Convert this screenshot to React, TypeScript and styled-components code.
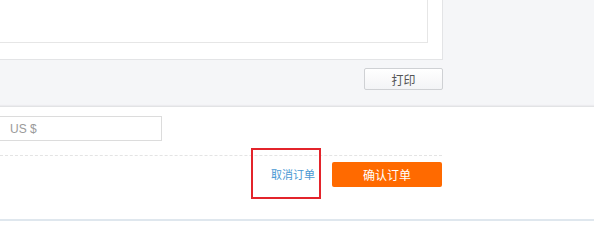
import styled, { createGlobalStyle } from "styled-components";

const GlobalStyle = createGlobalStyle`
  html, body {
    margin: 0;
    padding: 0;
    background: #ffffff;
    font-family: "Noto Sans CJK SC", "Liberation Sans", sans-serif;
    font-size: 12px;
  }
`;

const Page = styled.div`
  width: 594px;
  height: 221px;
  overflow: hidden;
  display: flex;
  flex-direction: column;
`;

const PrintArea = styled.section`
  background: #f5f6f8;
  height: 107px;
  flex-shrink: 0;
  box-sizing: border-box;
  border-bottom: 1px solid #e2e3e5;
  box-shadow: inset 0 -2px 1px -1px #ebecee;
  padding-right: 151px;
  display: flex;
  flex-direction: column;
`;

const Panel = styled.div`
  background: #ffffff;
  height: 60px;
  box-sizing: border-box;
  border-right: 1px solid #e3e4e6;
  border-bottom: 1px solid #e3e4e6;
  padding: 0 14px 16px 0;
  display: flex;
`;

const Memo = styled.div`
  flex: 1;
  border-right: 1px solid #e6e6e6;
  border-bottom: 1px solid #e6e6e6;
`;

const PrintRow = styled.div`
  display: flex;
  justify-content: flex-end;
  padding-top: 8px;
`;

const GhostButton = styled.button`
  width: 79px;
  height: 22px;
  box-sizing: border-box;
  border: 1px solid #cfd1d4;
  border-radius: 2px;
  background: linear-gradient(#ffffff, #f3f4f6);
  color: #555;
  font-family: inherit;
  font-size: 12px;
  padding: 0;
  cursor: pointer;
`;

const OrderArea = styled.section`
  flex: 1;
  background: #fff;
  border-bottom: 2px solid #dfe7ee;
  padding-top: 9px;
  box-sizing: border-box;
  width: 594px;
`;

const AmountInput = styled.input`
  display: block;
  width: 162px;
  height: 25px;
  box-sizing: border-box;
  border: 1px solid #dcdcdc;
  border-left: none;
  padding: 0 10px;
  font-family: "Liberation Sans", sans-serif;
  font-size: 12px;
  color: #333;
  outline: none;

  &::placeholder {
    color: #9a9a9a;
  }
`;

const Actions = styled.div`
  width: 442px;
  margin-top: 14px;
  border-top: 1px dashed #e4e4e4;
  padding-top: 6px;
  display: flex;
  justify-content: flex-end;
  align-items: center;
  gap: 17px;
`;

const CancelLink = styled.a`
  position: relative;
  color: #4a98d3;
  font-size: 11px;
  line-height: 25px;
  text-decoration: none;
  cursor: pointer;
`;

const Highlight = styled.span`
  position: absolute;
  left: -20px;
  right: -6px;
  top: -14px;
  bottom: -12px;
  border: 2px solid #e3242b;
  pointer-events: none;
`;

const PrimaryButton = styled.button`
  width: 110px;
  height: 25px;
  border: none;
  border-radius: 2px;
  background: #ff6a00;
  color: #fff;
  font-family: inherit;
  font-size: 12px;
  padding: 0;
  cursor: pointer;
`;

export default function App() {
  return (
    <Page>
      <GlobalStyle />
      <PrintArea>
        <Panel>
          <Memo />
        </Panel>
        <PrintRow>
          <GhostButton>打印</GhostButton>
        </PrintRow>
      </PrintArea>
      <OrderArea>
        <AmountInput placeholder="US $" />
        <Actions>
          <CancelLink>
            取消订单
            <Highlight />
          </CancelLink>
          <PrimaryButton>确认订单</PrimaryButton>
        </Actions>
      </OrderArea>
    </Page>
  );
}
